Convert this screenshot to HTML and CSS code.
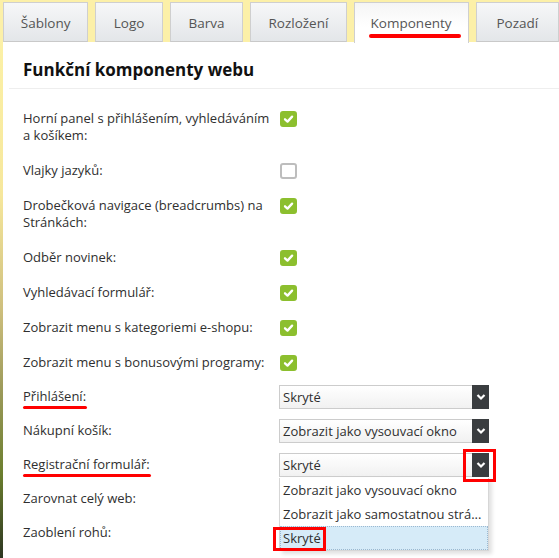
FILE: index.html
```html
<!DOCTYPE html>
<html lang="cs">
<head>
<meta charset="utf-8">
<title>Komponenty</title>
<link rel="stylesheet" href="styles.css">
</head>
<body>
<div class="frame">
  <nav class="tabs">
    <div class="tab t1">Šablony</div>
    <div class="tab t2">Logo</div>
    <div class="tab t3">Barva</div>
    <div class="tab t4">Rozložení</div>
    <div class="tab t5 active">Komponenty<span class="mark mark-tab"></span></div>
    <div class="tab t6">Pozadí</div>
  </nav>
  <section class="panel">
    <div class="inner">
      <h2 class="title">Funkční komponenty webu</h2>
      <div class="rows">
        <div class="row"><div class="label">Horní panel s přihlášením, vyhledáváním a košíkem:</div><div class="ctrl"><span class="cb on"><svg viewBox="0 0 16 16"><path d="M4.5 8.3 L7 10.6 L11.6 5.6" /></svg></span></div></div>
        <div class="row"><div class="label">Vlajky jazyků:</div><div class="ctrl"><span class="cb"></span></div></div>
        <div class="row"><div class="label">Drobečková navigace (breadcrumbs) na Stránkách:</div><div class="ctrl"><span class="cb on"><svg viewBox="0 0 16 16"><path d="M4.5 8.3 L7 10.6 L11.6 5.6" /></svg></span></div></div>
        <div class="row"><div class="label">Odběr novinek:</div><div class="ctrl"><span class="cb on"><svg viewBox="0 0 16 16"><path d="M4.5 8.3 L7 10.6 L11.6 5.6" /></svg></span></div></div>
        <div class="row"><div class="label">Vyhledávací formulář:</div><div class="ctrl"><span class="cb on"><svg viewBox="0 0 16 16"><path d="M4.5 8.3 L7 10.6 L11.6 5.6" /></svg></span></div></div>
        <div class="row"><div class="label">Zobrazit menu s kategoriemi e-shopu:</div><div class="ctrl"><span class="cb on"><svg viewBox="0 0 16 16"><path d="M4.5 8.3 L7 10.6 L11.6 5.6" /></svg></span></div></div>
        <div class="row"><div class="label">Zobrazit menu s bonusovými programy:</div><div class="ctrl"><span class="cb on"><svg viewBox="0 0 16 16"><path d="M4.5 8.3 L7 10.6 L11.6 5.6" /></svg></span></div></div>
        <div class="row tight"><div class="label"><span class="marked">Přihlášení:<span class="mark mark-line"></span></span></div><div class="ctrl"><div class="select"><span class="val">Skryté</span><span class="btn"><svg viewBox="0 0 10 8"><path d="M1.5 2 L5 5.5 L8.5 2" /></svg></span></div></div></div>
        <div class="row tight"><div class="label">Nákupní košík:</div><div class="ctrl"><div class="select"><span class="val">Zobrazit jako vysouvací okno</span><span class="btn"><svg viewBox="0 0 10 8"><path d="M1.5 2 L5 5.5 L8.5 2" /></svg></span></div></div></div>
        <div class="row tight"><div class="label"><span class="marked">Registrační formulář:<span class="mark mark-line"></span></span></div><div class="ctrl"><div class="select open"><span class="val">Skryté</span><span class="btn"><svg viewBox="0 0 10 8"><path d="M1.5 2 L5 5.5 L8.5 2" /></svg></span><span class="mark mark-btn"></span>
          <ul class="list">
            <li class="opt">Zobrazit jako vysouvací okno</li>
            <li class="opt">Zobrazit jako samostatnou strá...</li>
            <li class="opt sel">Skryté<span class="mark mark-opt"></span></li>
          </ul>
        </div></div></div>
        <div class="row tight"><div class="label">Zarovnat celý web:</div><div class="ctrl"></div></div>
        <div class="row tight"><div class="label">Zaoblení rohů:</div><div class="ctrl"></div></div>
      </div>
    </div>
  </section>
</div>
</body>
</html>
```
FILE: styles.css
```css
html, body {
  margin: 0;
  padding: 0;
  height: 100%;
  overflow: hidden;
}
body {
  background: linear-gradient(to bottom, #fdf3a9 0%, #f6e79c 35%, #cfc07e 55%, #9c9a5a 70%, #6b7e2e 85%, #2c3621 100%);
  font-family: "Open Sans", "DejaVu Sans", sans-serif;
  color: #333;
}
.frame {
  margin-left: 3px;
  padding-top: 2px;
  height: 100%;
  box-sizing: border-box;
  display: flex;
  flex-direction: column;
}
.tabs {
  display: flex;
  gap: 7px;
  height: 40px;
  background: #fcf0a8;
  margin-left: -3px;
  padding-left: 3px;
  margin-top: -2px;
  padding-top: 2px;
}
.tab {
  box-sizing: border-box;
  height: 40px;
  border: 1px solid #cfcfcf;
  border-bottom-color: #c9c9c9;
  background: linear-gradient(to bottom, #f6f7f8, #e3e6e9);
  font-size: 13.5px;
  color: #555;
  text-align: center;
  line-height: 40px;
  position: relative;
}
.t1 { width: 86px; }
.t2 { width: 68px; }
.t3 { width: 74px; }
.t4 { width: 97px; }
.t5 { width: 116px; }
.t6 { width: 84px; }
.tab.active {
  background: linear-gradient(to bottom, #f5f5f5, #ffffff 60%);
  border-bottom: none;
  height: 41px;
  z-index: 2;
}
.panel {
  flex: 1;
  background: #fff;
}
.inner {
  margin-left: 6px;
}
.title {
  margin: 0;
  font-size: 17px;
  font-weight: 700;
  color: #111;
  line-height: 23px;
  padding: 16px 0 7px 14px;
  border-bottom: 1px solid #eeeeee;
}
.rows {
  padding: 11.5px 0 0 14px;
}
.row {
  display: grid;
  grid-template-columns: 257px 1fr;
  align-items: start;
}
.label {
  font-size: 13px;
  line-height: 17px;
  padding: 9px 8px 9px 0;
  color: #2f2f2f;
}
.ctrl {
  padding-top: 9px;
}
.row.tight .label {
  padding-top: 8.5px;
  padding-bottom: 8.5px;
}
.row.tight .ctrl {
  padding-top: 8.5px;
}
.cb {
  display: block;
  box-sizing: border-box;
  width: 17px;
  height: 16px;
  margin-top: 1px;
  border: 2px solid #bdbdbd;
  border-radius: 3px;
  background: #fff;
}
.cb.on {
  background: #8cbf2e;
  border-color: #8cbf2e;
}
.cb svg {
  display: block;
  width: 17px;
  height: 16px;
  margin: -2px 0 0 -2px;
}
.cb svg path {
  fill: none;
  stroke: #fff;
  stroke-width: 2.3;
  stroke-linecap: round;
  stroke-linejoin: round;
}
.select {
  position: relative;
  box-sizing: border-box;
  width: 210px;
  height: 24px;
  margin-top: -3.5px;
  margin-left: -1px;
  border: 1px solid #cccccc;
  background: linear-gradient(to bottom, #ffffff, #f1f1f1);
  display: flex;
}
.val {
  flex: 1;
  font-size: 13px;
  line-height: 22px;
  padding-left: 3px;
  color: #2f2f2f;
}
.btn {
  width: 17px;
  margin: -1px -1px -1px 0;
  background: #3a3d40;
  display: flex;
  align-items: center;
  justify-content: center;
}
.btn svg {
  width: 10px;
  height: 8px;
}
.btn svg path {
  fill: none;
  stroke: #fff;
  stroke-width: 2.2;
}
.list {
  position: absolute;
  left: -1px;
  top: 24px;
  width: 210px;
  box-sizing: border-box;
  margin: 0;
  padding: 0;
  list-style: none;
  background: #fff;
  border: 1px solid #d6d6d6;
  border-top: none;
  box-shadow: 3px 3px 4px rgba(0,0,0,0.12);
  z-index: 5;
}
.opt {
  font-size: 13px;
  line-height: 24px;
  padding-left: 3px;
  color: #2f2f2f;
  white-space: nowrap;
  position: relative;
}
.opt.sel {
  background: #d6ebf8;
  outline: 1px dotted #9bb8d0;
  outline-offset: -1px;
}
.marked {
  position: relative;
  display: inline-block;
}
.mark {
  position: absolute;
  pointer-events: none;
}
.mark-tab {
  left: 14px;
  width: 92px;
  top: 31px;
  height: 4px;
  border-radius: 3px;
  background: #ff0000;
}
.mark-line {
  left: 0;
  right: -1px;
  bottom: -4px;
  height: 3.5px;
  border-radius: 2px;
  background: #ff0000;
}
.mark-btn {
  right: -8px;
  top: -5px;
  width: 33px;
  height: 33px;
  box-sizing: border-box;
  border: 3px solid #ff0000;
  z-index: 6;
}
.mark-opt {
  left: -7px;
  top: 1px;
  width: 53px;
  height: 24px;
  box-sizing: border-box;
  border: 3px solid #ff0000;
}
```
